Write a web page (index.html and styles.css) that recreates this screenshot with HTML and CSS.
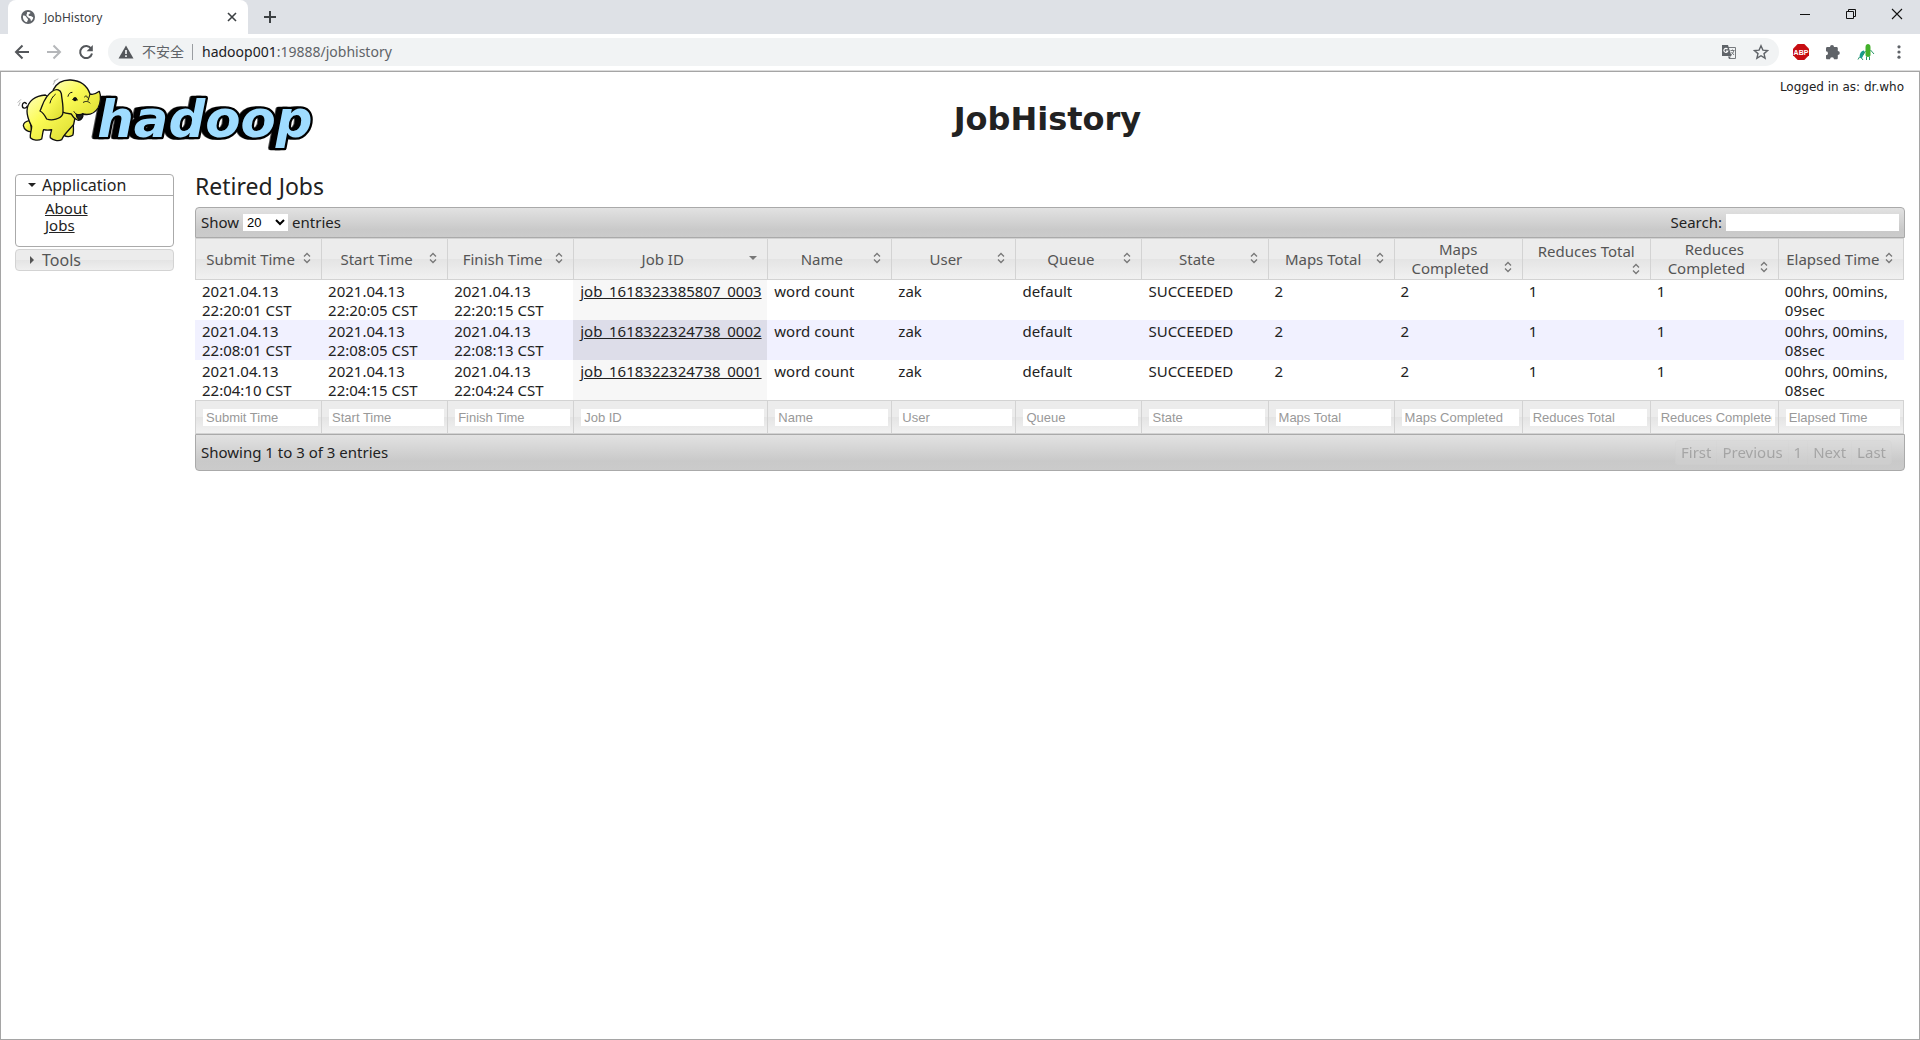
FILE: index.html
```html
<!DOCTYPE html>
<html lang="en">
<head>
<meta charset="utf-8">
<title>JobHistory</title>
<link rel="stylesheet" href="styles.css">
</head>
<body>
<svg class="defs" aria-hidden="true">
  <symbol id="both" viewBox="0 0 16 16"><path d="M5 6.500l3-3 3 3M5 9.500l3 3 3-3" fill="none" stroke="#777" stroke-width="1.300"/></symbol>
  <symbol id="down" viewBox="0 0 16 16"><path d="M4 6h8l-4 4z" fill="currentColor"/></symbol>
</svg>
<header class="browser">
  <div class="tabstrip">
    <div class="tab">
      <svg class="i14" viewBox="0 0 14 14"><circle cx="7" cy="7" r="7" fill="#5f6368"/><path d="M2 5.500c2 0 3 .5 3.500 1.800s1.500 1 1.500 2.200-1 1-.8 2.700C3.500 12 1.500 9.500 2 5.500zM6 2.200c1.500-.6 3 0 3.500.6-.3 1.200-1.800 1-2 2s.8 1.200 2 1.200 1.700 1 2.700 1.200c0 1.500-1 3.300-2.300 4-.2-1.500-.2-2.500-1.400-3S6 6.500 5.500 5.500 6.500 3.500 6 2.200z" fill="#fff"/></svg>
      <span class="tab-title">JobHistory</span>
      <button class="icon" aria-label="Close tab"><svg class="i14" viewBox="0 0 14 14"><path d="M3 3l8 8M11 3l-8 8" stroke="#3c4043" stroke-width="1.600"/></svg></button>
    </div>
    <button class="icon newtab" aria-label="New tab"><svg class="i14" viewBox="0 0 14 14"><path d="M7 1v12M1 7h12" stroke="#3c4043" stroke-width="2"/></svg></button>
    <div class="window-controls">
      <button class="icon" aria-label="Minimize"><svg class="i14" viewBox="0 0 14 14"><path d="M2 7.500h10" stroke="#111"/></svg></button>
      <button class="icon" aria-label="Restore"><svg class="i14" viewBox="0 0 14 14"><path d="M2.500 4.500h7v7h-7zM4.500 4.500v-2h7v7h-2" fill="none" stroke="#111"/></svg></button>
      <button class="icon" aria-label="Close"><svg class="i14" viewBox="0 0 14 14"><path d="M2 2l10 10M12 2L2 12" stroke="#111" stroke-width="1.100"/></svg></button>
    </div>
  </div>
  <nav class="toolbar">
    <button class="icon" aria-label="Back"><svg class="i16" viewBox="0 0 16 16"><path d="M15 8H2.500M8.500 1.500L2 8l6.500 6.500" fill="none" stroke="#54575b" stroke-width="2"/></svg></button>
    <button class="icon" aria-label="Forward"><svg class="i16" viewBox="0 0 16 16"><path d="M1 8h12.500M7.500 1.500L14 8l-6.500 6.500" fill="none" stroke="#b5b7ba" stroke-width="2"/></svg></button>
    <button class="icon" aria-label="Reload"><svg class="i16" viewBox="0 0 16 16"><path d="M13.200 4.800A6 6 0 1 0 14 9.500" fill="none" stroke="#54575b" stroke-width="2"/><path d="M14.800 1v6.200H8.600z" fill="#54575b"/></svg></button>
    <div class="omnibox">
      <svg class="i16" viewBox="0 0 16 16"><path d="M8 1.500L15.500 14.500H.5z" fill="#54575b"/><path d="M8 6v4M8 11.200v1.800" stroke="#f1f3f4" stroke-width="1.700"/></svg>
      <span class="insecure">不安全</span>
      <span class="url"><b>hadoop001</b>:19888/jobhistory</span>
      <button class="icon" aria-label="Translate"><svg class="i16" viewBox="0 0 16 16"><path d="M7 3.500h7.500v11H8" fill="none" stroke="#777a7e"/><path d="M1 1h6l3.500 11H1z" fill="#5f6368"/><path d="M6.500 5.200A2 2 0 1 0 6.800 7H5" fill="none" stroke="#fff" stroke-width="1.100"/><path d="M9.500 6.500h4M11.500 5.500v1M12.800 6.500c-.3 2-1.500 3.500-3 4.500M10.500 8l2.500 3" fill="none" stroke="#777a7e"/><path d="M7 12.500h3l-2 2.500z" fill="#5f6368"/></svg></button>
      <button class="icon star" aria-label="Bookmark"><svg class="i16" viewBox="0 0 16 16"><path d="M8 1.800l1.900 4.300 4.700.4-3.600 3.100 1.100 4.600L8 11.700l-4.100 2.500L5 9.600 1.400 6.500l4.700-.4z" fill="none" stroke="#5f6368" stroke-width="1.400"/></svg></button>
    </div>
    <button class="icon" aria-label="Adblock Plus"><svg class="i16" viewBox="0 0 16 16"><path d="M4.700 0h6.600L16 4.700v6.600L11.300 16H4.700L0 11.300V4.700z" fill="#c70d12"/><text x="8" y="10.800" class="abp">ABP</text></svg></button>
    <button class="icon" aria-label="Extensions"><svg class="i16" viewBox="0 0 16 16"><path d="M1 4.500C1 3.700 1.500 3 2.300 3H5a2 2 0 1 1 4 0h2.500c.8 0 1.300.6 1.300 1.300V7a2 2 0 1 1 0 4v3c0 .8-.5 1.300-1.300 1.300H9a2 2 0 0 0-4 0H2.300C1.500 15.300 1 14.800 1 14v-2.700a2 2 0 0 0 0-4z" fill="#5f6368"/></svg></button>
    <button class="icon" aria-label="Profile"><svg class="i18" viewBox="0 0 18 18"><path d="M8.500 4c0-4 5-4 5 0v8c0 2.500-5 2.500-5 0z" fill="#43b02a"/><path d="M2.500 14.500C2.500 10.500 4 8 6.500 7.500c2 .5.500 4.500-2 8z" fill="#189c8c"/><path d="M13.500 7l3.500 4M8.500 8L6 12M9.500 13.500V17M12.500 13.500V17M2.500 14l-1.500 2.500M4.500 15l1.500 2" fill="none" stroke="#27966a"/></svg></button>
    <button class="icon" aria-label="Menu"><svg class="i16" viewBox="0 0 16 16"><g fill="#5f6368"><circle cx="8" cy="2.800" r="1.600"/><circle cx="8" cy="8" r="1.600"/><circle cx="8" cy="13.200" r="1.600"/></g></svg></button>
  </nav>
</header>
<main class="page">
  <header class="banner">
    <a class="logo" href="#" aria-label="hadoop">
      <svg viewBox="45 20 900 225">
        <defs><linearGradient id="skin" x1="0" y1="0" x2="1" y2="1"><stop offset="0" stop-color="#ffffb8"/><stop offset=".4" stop-color="#fbfb55"/><stop offset="1" stop-color="#dada2e"/></linearGradient></defs>
        <g class="word"><text x="292" y="200">hadoop</text></g>
        <g transform="translate(36 12)" fill="url(#skin)" stroke="#111" stroke-width="4" stroke-linejoin="round" stroke-linecap="round">
          <path d="M46 95c-4 10-16 8-15-3 1-8 9-10 12-4" fill="none"/>
          <path d="M160 145c14-12 22-8 24 6 0 12 2 24-2 32-8 6-20 4-26 0z"/>
          <path d="M54 138c-10 2-20 8-20 16 2 12 14 20 26 18z"/>
          <path d="M100 62C72 64 46 78 45 110c0 20 8 34 14 46 0 12-6 24-4 34 8 8 24 10 34 4 3-10 2-20 6-28 8 2 16 2 24 0-2 10-6 18-4 24 8 8 24 12 34 6 8-18 24-30 36-46l6-30z"/>
          <path d="M124 46C134 26 152 16 176 17c30 2 50 18 58 42 12 4 20-2 28-8 6 14 4 36-4 50-10 16-28 22-46 18 2 10-6 22-16 18-10-4-14-10-18-18-20-2-40-8-52-20z"/>
          <path d="M122 50c12-8 24-4 26 8 2 20 8 42 4 62-6 14-32 20-48 14-4-8-12-20-20-24 8-14 10-42 38-60z"/>
          <path d="M193 120c8 2 14 2 20-2 0 12-8 20-14 16-4-3-6-8-6-14z" fill="#222"/>
          <path d="M182 76c4-8 12-8 14 1M218 68c2-6 8-4 8 2M168 66c2-8 6-12 12-12M214 84c6-4 14-4 20 2M234 60l-6 18M186 112c2 4 5 6 8 8M130 60c-8 6-14 16-16 26" fill="none" stroke-width="3"/>
          <path d="M126 20l12-6M124 30l5-10M18 84l8-8M20 94l4-9" fill="none" stroke="#888" stroke-width="2"/>
          <circle cx="189" cy="75" r="4" fill="#111"/>
        </g>
      </svg>
    </a>
    <h1>JobHistory</h1>
    <div class="user">Logged in as: dr.who</div>
  </header>
  <div class="columns">
    <aside class="sidebar">
      <section class="menu open">
        <h3><svg class="i16" viewBox="0 0 16 16"><use href="#down"/></svg>Application</h3>
        <ul><li><a href="#">About</a></li><li><a href="#">Jobs</a></li></ul>
      </section>
      <section class="menu">
        <h3><svg class="i16" viewBox="0 0 16 16"><path d="M6 4v8l4-4z" fill="currentColor"/></svg>Tools</h3>
      </section>
    </aside>
    <section class="content">
      <h2>Retired Jobs</h2>
      <div class="bar top">
        <label>Show <select><option>20</option><option>40</option></select> entries</label>
        <label class="search">Search: <input type="text"></label>
      </div>
      <table>
        <colgroup><col class="c126"><col class="c126"><col class="c126"><col class="c194"><col class="c124"><col class="c124"><col class="c126"><col class="c126"><col class="c126"><col class="c128"><col class="c128"><col class="c128"><col class="c126"></colgroup>
        <thead><tr>
          <th>Submit Time<svg class="sort"><use href="#both"/></svg></th>
          <th>Start Time<svg class="sort"><use href="#both"/></svg></th>
          <th>Finish Time<svg class="sort"><use href="#both"/></svg></th>
          <th>Job ID<svg class="sort"><use href="#down"/></svg></th>
          <th>Name<svg class="sort"><use href="#both"/></svg></th>
          <th>User<svg class="sort"><use href="#both"/></svg></th>
          <th>Queue<svg class="sort"><use href="#both"/></svg></th>
          <th>State<svg class="sort"><use href="#both"/></svg></th>
          <th>Maps Total<svg class="sort"><use href="#both"/></svg></th>
          <th>Maps Completed<svg class="sort"><use href="#both"/></svg></th>
          <th>Reduces Total<br><svg class="sort"><use href="#both"/></svg></th>
          <th>Reduces Completed<svg class="sort"><use href="#both"/></svg></th>
          <th>Elapsed Time<svg class="sort"><use href="#both"/></svg></th>
        </tr></thead>
        <tbody>
          <tr><td>2021.04.13 22:20:01 CST</td><td>2021.04.13 22:20:05 CST</td><td>2021.04.13 22:20:15 CST</td><td class="job"><a href="#">job_1618323385807_0003</a></td><td>word count</td><td>zak</td><td>default</td><td>SUCCEEDED</td><td>2</td><td>2</td><td>1</td><td>1</td><td>00hrs, 00mins, 09sec</td></tr>
          <tr><td>2021.04.13 22:08:01 CST</td><td>2021.04.13 22:08:05 CST</td><td>2021.04.13 22:08:13 CST</td><td class="job"><a href="#">job_1618322324738_0002</a></td><td>word count</td><td>zak</td><td>default</td><td>SUCCEEDED</td><td>2</td><td>2</td><td>1</td><td>1</td><td>00hrs, 00mins, 08sec</td></tr>
          <tr><td>2021.04.13 22:04:10 CST</td><td>2021.04.13 22:04:15 CST</td><td>2021.04.13 22:04:24 CST</td><td class="job"><a href="#">job_1618322324738_0001</a></td><td>word count</td><td>zak</td><td>default</td><td>SUCCEEDED</td><td>2</td><td>2</td><td>1</td><td>1</td><td>00hrs, 00mins, 08sec</td></tr>
        </tbody>
        <tfoot><tr>
          <th><input type="text" aria-label="Submit Time" placeholder="Submit Time"></th>
          <th><input type="text" aria-label="Start Time" placeholder="Start Time"></th>
          <th><input type="text" aria-label="Finish Time" placeholder="Finish Time"></th>
          <th><input type="text" aria-label="Job ID" placeholder="Job ID"></th>
          <th><input type="text" aria-label="Name" placeholder="Name"></th>
          <th><input type="text" aria-label="User" placeholder="User"></th>
          <th><input type="text" aria-label="Queue" placeholder="Queue"></th>
          <th><input type="text" aria-label="State" placeholder="State"></th>
          <th><input type="text" aria-label="Maps Total" placeholder="Maps Total"></th>
          <th><input type="text" aria-label="Maps Completed" placeholder="Maps Completed"></th>
          <th><input type="text" aria-label="Reduces Total" placeholder="Reduces Total"></th>
          <th><input type="text" aria-label="Reduces Completed" placeholder="Reduces Completed"></th>
          <th><input type="text" aria-label="Elapsed Time" placeholder="Elapsed Time"></th>
        </tr></tfoot>
      </table>
      <div class="bar bottom">
        <span>Showing 1 to 3 of 3 entries</span>
        <div class="pager"><button>First</button><button>Previous</button><button>1</button><button>Next</button><button>Last</button></div>
      </div>
    </section>
  </div>
</main>
</body>
</html>
```
FILE: styles.css
```css
* { box-sizing: border-box; }
body {
  margin: 0;
  min-height: 100vh;
  display: flex;
  flex-direction: column;
  background: #fff;
  color: #222;
  font: 15px/19px "Noto Sans", "Noto Sans CJK SC", sans-serif;
}
a { color: #222; }
.defs { display: none; }
.i14 { width: 14px; height: 14px; display: block; flex: none; }
.i16 { width: 16px; height: 16px; display: block; flex: none; }
.i18 { width: 18px; height: 18px; display: block; flex: none; }
.icon { border: 0; padding: 0; background: none; display: flex; align-items: center; }

/* browser window */
.tabstrip { display: flex; height: 34px; background: #dee1e6; padding-left: 8px; }
.tab {
  display: flex;
  align-items: center;
  width: 240px;
  padding: 0 9px 0 13px;
  background: #fff;
  border-radius: 8px 8px 0 0;
}
.tab-title { flex: 1; padding-left: 9px; font-size: 12px; color: #3c4043; }
.newtab { margin-left: 15px; }
.window-controls { display: flex; gap: 32px; margin-left: auto; padding: 0 16px 6px 0; }
.toolbar {
  display: flex;
  align-items: center;
  gap: 16px;
  height: 37px;
  padding: 0 13px 1px 14px;
  border-bottom: 1px solid #dcdcdc;
}
.omnibox {
  flex: 1;
  display: flex;
  align-items: center;
  height: 28px;
  margin: 0 -2px;
  padding: 0 10px;
  border-radius: 14px;
  background: #f1f3f4;
  color: #5f6368;
  font-size: 14px;
}
.insecure { margin-left: 8px; padding-right: 8px; border-right: 1px solid #9a9da1; line-height: 16px; }
.url { flex: 1; padding-left: 9px; }
.url b { font-weight: 400; color: #202124; }
.star { margin-left: 16px; }
.abp { font: bold 7px "Liberation Sans", sans-serif; fill: #fff; text-anchor: middle; }

/* page */
.page { flex: 1; border: 1px solid #a5a5a5; padding: 0 14px; }
.banner {
  display: grid;
  grid-template-columns: 300px 1fr auto;
  height: 102px;
  padding-top: 5px;
}
.logo { width: 300px; height: 75px; }
.logo svg { display: block; width: 100%; height: 100%; }
.word { filter: drop-shadow(-14px 0 0 #000); }
.word text {
  font: italic bold 154px "DejaVu Sans", sans-serif;
  fill: #9fdcff;
  stroke: #000;
  stroke-width: 14px;
  stroke-linejoin: round;
  paint-order: stroke;
}
h1 { margin: 0; padding-top: 23px; text-align: center; font: bold 32px/38px "DejaVu Sans", sans-serif; }
.user { padding-right: 1px; font: 12px/20px "DejaVu Sans", sans-serif; }
.columns { display: flex; gap: 21px; }
.sidebar { width: 159px; display: flex; flex-direction: column; gap: 2px; }
.menu { border: 1px solid #d3d3d3; border-radius: 4px; background: linear-gradient(#ececec 50%, #e4e4e4 50%, #efefef); color: #555; }
.menu.open { border-color: #aaa; background: #fff; color: #222; }
.menu h3 { display: flex; align-items: center; gap: 2px; height: 20px; margin: 0; padding-left: 8px; font-size: 16px; font-weight: 400; }
.open h3 { border-bottom: 1px solid #aaa; height: 21px; }
.menu ul { list-style: none; margin: 0; padding: 4px 0 12px 29px; line-height: 17px; }
.content { flex: 1; min-width: 0; }
h2 { margin: 0; font-size: 23px; line-height: 25px; font-weight: 400; padding-bottom: 8px; }
.bar {
  display: flex;
  align-items: center;
  justify-content: space-between;
  border: 1px solid #aaa;
  background: linear-gradient(#e2e2e2, #c9c9c9 75%, #cbcbcb);
  padding: 0 5px;
}
.bar label { display: flex; align-items: center; gap: 4px; }
.top { height: 31px; border-radius: 4px 4px 0 0; }
.bottom { height: 37px; border-radius: 0 0 4px 4px; padding-right: 12px; }
input, select { border: 0; border-radius: 0; background: #fff; font: 13px/17px "Liberation Sans", sans-serif; height: 17px; }
select { width: 45px; padding: 0; }
.search input { width: 173px; }
table { width: calc(100% - 1px); table-layout: fixed; border-collapse: separate; border-spacing: 0; }
.c124 { width: 124px; }
.c126 { width: 126px; }
.c128 { width: 128px; }
.c194 { width: 194px; }
th {
  height: 42px;
  padding: 1px 6px;
  border: 1px solid #d3d3d3;
  border-right: 0;
  background: linear-gradient(#ececec 50%, #e4e4e4 50%, #f1f1f1);
  color: #555;
  font-weight: 400;
}
th:last-child { border-right: 1px solid #d3d3d3; }
.sort { float: right; width: 16px; height: 16px; color: #777; }
td { height: 40px; padding: 2px 7px 0; vertical-align: top; }
tbody tr:nth-child(even) { background: #f1f1ff; }
.job { background: #f7f7f7; padding-right: 0; }
tr:nth-child(even) .job { background: #dddde9; }
tfoot th { height: 34px; padding: 0 3px 0 7px; }
tfoot input { display: block; width: 100%; padding: 0 3px; }
tfoot input::placeholder { color: #999; opacity: 1; }
.pager { display: flex; opacity: .35; }
.pager button {
  height: 25px;
  padding: 0 5px;
  border: 1px solid #d3d3d3;
  border-right: 0;
  background: #d8d8d8;
  color: #555;
  font: inherit;
}
.pager button:first-child { border-radius: 4px 0 0 4px; }
.pager button:last-child { border-right: 1px solid #d3d3d3; border-radius: 0 4px 4px 0; }
```
